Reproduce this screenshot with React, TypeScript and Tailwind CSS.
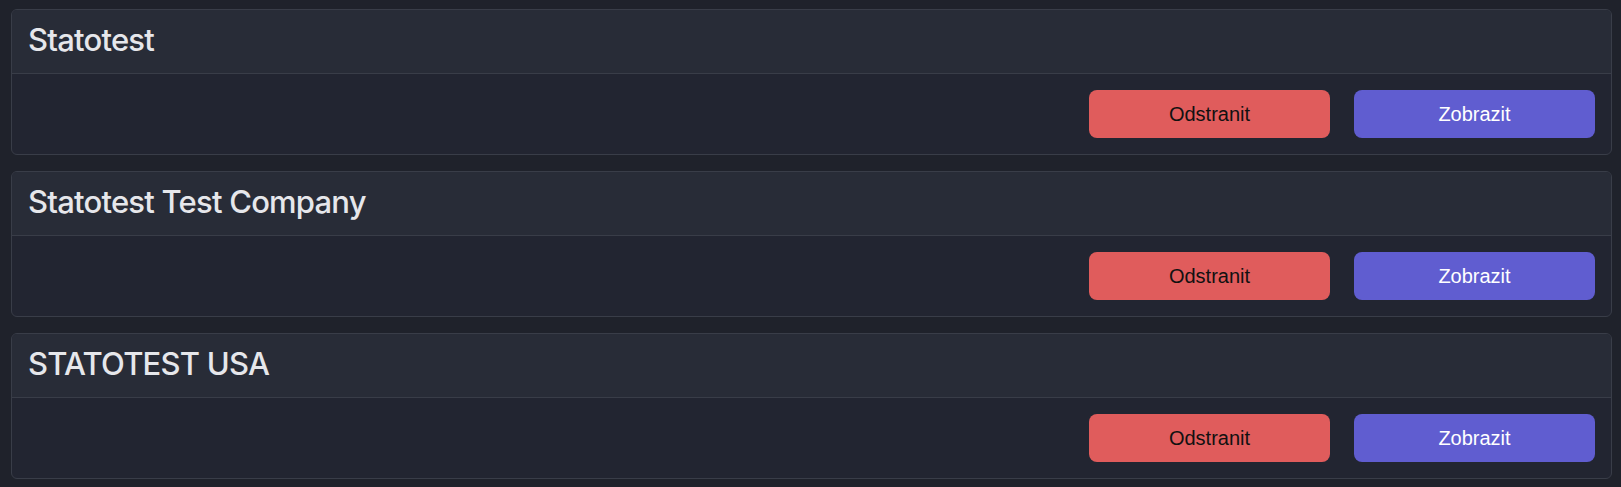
const companies = ["Statotest", "Statotest Test Company", "STATOTEST USA"];

function CompanyCard({ name }: { name: string }) {
  return (
    <div className="rounded-md border border-[#393d48] bg-[#222531] overflow-hidden">
      <div className="bg-[#282c37] border-b border-[#393d48] px-4 pt-[11px] pb-[14px]">
        <h2
          className="text-[31px] leading-[38px] font-medium tracking-[-0.025em] text-[#e6e7eb]"
          style={{ fontFamily: 'Inter, "Liberation Sans", sans-serif' }}
        >
          {name}
        </h2>
      </div>
      <div className="flex justify-end gap-6 p-4">
        <button className="w-[241px] h-12 rounded-lg bg-[#e05c5c] text-[20px] text-[#111111]">
          Odstranit
        </button>
        <button className="w-[241px] h-12 rounded-lg bg-[#605dd0] text-[20px] text-white">
          Zobrazit
        </button>
      </div>
    </div>
  );
}

export default function App() {
  return (
    <div
      className="min-h-screen bg-[#1f222b] pl-[11px] pr-[9px] pt-[9px] flex flex-col gap-4"
      style={{ fontFamily: '"Liberation Sans", Arial, sans-serif' }}
    >
      {companies.map((c) => (
        <CompanyCard key={c} name={c} />
      ))}
    </div>
  );
}
